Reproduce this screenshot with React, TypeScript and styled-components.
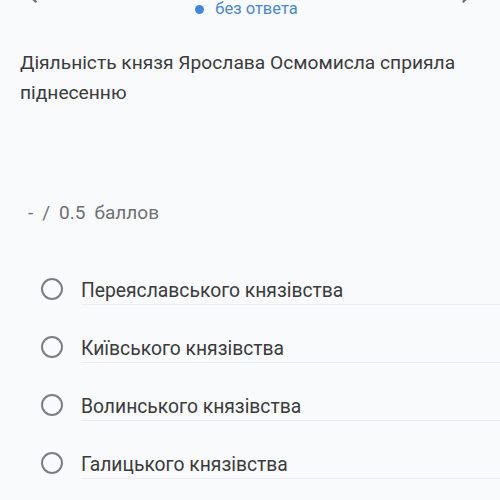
import React from "react";
import styled, { createGlobalStyle } from "styled-components";

const GlobalStyle = createGlobalStyle`
  html, body {
    margin: 0;
    padding: 0;
    background: #f9fafc;
    font-family: Roboto, "Noto Sans", Arial, sans-serif;
    overflow: hidden;
  }
`;

const Page = styled.div`
  width: 500px;
  height: 500px;
  background: #f9fafc;
  overflow: hidden;
`;

const Header = styled.div`
  display: flex;
  align-items: center;
  justify-content: space-between;
  height: 18px;
  padding: 0 28px 0 27px;
`;

const Chevron = styled.svg`
  width: 10px;
  height: 18px;
  margin-top: -30px;
  color: #6b6e73;
`;

const Status = styled.div`
  display: flex;
  align-items: center;
  gap: 11px;
  margin-right: 6px;
  color: #4a88cc;
  font-size: 16.5px;
  line-height: 18px;
`;

const Dot = styled.span`
  width: 9px;
  height: 9px;
  border-radius: 50%;
  background: #3f86dc;
`;

const Question = styled.p`
  margin: 30px 0 0;
  padding: 0 20px;
  font-size: 19.2px;
  line-height: 30px;
  color: #3a3b3d;
`;

const Score = styled.div`
  display: flex;
  gap: 9px;
  margin: 94px 0 0;
  padding-left: 28px;
  font-size: 19px;
  line-height: 22px;
  color: #6d7074;
`;

const Options = styled.div`
  display: flex;
  flex-direction: column;
  margin-top: 36px;
  padding-left: 41px;
`;

const Option = styled.label`
  display: flex;
  align-items: center;
  gap: 18px;
  height: 58px;
`;

const Radio = styled.span`
  flex: none;
  width: 18px;
  height: 18px;
  border: 2.5px solid #7b7e82;
  border-radius: 50%;
`;

const OptionText = styled.span`
  flex: 1;
  padding: 3px 0 2px;
  font-size: 19.3px;
  line-height: 22px;
  color: #3a3b3d;
  border-bottom: 1px solid #ebedf0;
  margin-top: 4px;
`;

const options = [
  "Переяславського князівства",
  "Київського князівства",
  "Волинського князівства",
  "Галицького князівства",
];

const App = () => {
  return (
    <Page>
      <GlobalStyle />
      <Header>
        <Chevron viewBox="0 0 10 18" fill="none">
          <path d="M8.5 1.5 1.5 9l7 7.5" stroke="currentColor" strokeWidth="2.4" strokeLinecap="round" strokeLinejoin="round" />
        </Chevron>
        <Status>
          <Dot />
          <span>без ответа</span>
        </Status>
        <Chevron viewBox="0 0 10 18" fill="none">
          <path d="M1.5 1.5 8.5 9l-7 7.5" stroke="currentColor" strokeWidth="2.4" strokeLinecap="round" strokeLinejoin="round" />
        </Chevron>
      </Header>
      <Question>Діяльність князя Ярослава Осмомисла сприяла піднесенню</Question>
      <Score>
        <span>-</span>
        <span>/</span>
        <span>0.5</span>
        <span>баллов</span>
      </Score>
      <Options>
        {options.map((o) => (
          <Option key={o}>
            <Radio />
            <OptionText>{o}</OptionText>
          </Option>
        ))}
      </Options>
    </Page>
  );
};

export default App;
